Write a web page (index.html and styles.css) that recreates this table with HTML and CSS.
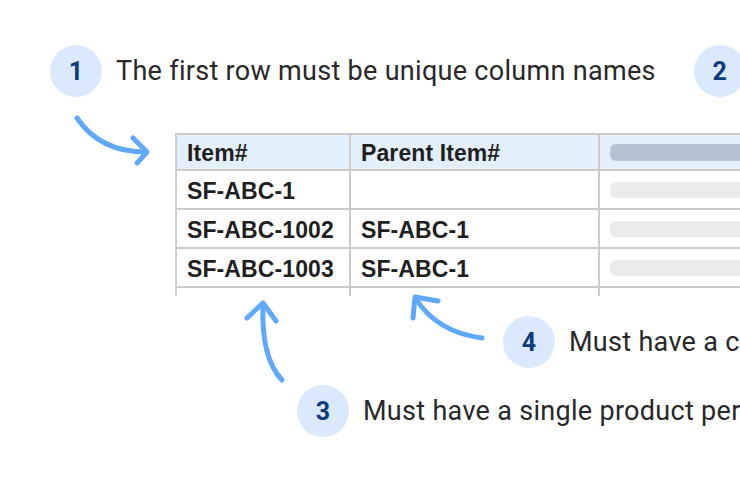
FILE: index.html
```html
<!DOCTYPE html>
<html>
<head>
<meta charset="utf-8">
<link rel="stylesheet" href="styles.css">
</head>
<body>
<div class="canvas">
  <div class="steps-top">
    <div class="step"><span class="num">1</span><span class="label">The first row must be unique column names</span></div>
    <div class="step"><span class="num">2</span><span class="label">Must have a parent column</span></div>
  </div>

  <table class="sheet">
    <tr class="head">
      <th class="c1">Item#</th>
      <th class="c2">Parent Item#</th>
      <th class="c3"><span class="bar bar-dark"></span></th>
    </tr>
    <tr class="row">
      <td class="c1">SF-ABC-1</td>
      <td class="c2"></td>
      <td class="c3"><span class="bar"></span></td>
    </tr>
    <tr class="row">
      <td class="c1">SF-ABC-1002</td>
      <td class="c2">SF-ABC-1</td>
      <td class="c3"><span class="bar"></span></td>
    </tr>
    <tr class="row">
      <td class="c1">SF-ABC-1003</td>
      <td class="c2">SF-ABC-1</td>
      <td class="c3"><span class="bar"></span></td>
    </tr>
    <tr class="tail">
      <td class="c1"></td>
      <td class="c2"></td>
      <td class="c3"></td>
    </tr>
  </table>

  <div class="step step-4"><span class="num">4</span><span class="label">Must have a child column</span></div>
  <div class="step step-3"><span class="num">3</span><span class="label">Must have a single product per row</span></div>

  <svg class="arrows" width="740" height="482" viewBox="0 0 740 482">
    <g fill="none" stroke="#5fa8fc" stroke-width="5" stroke-linecap="round" stroke-linejoin="round">
      <path d="M77 118 Q100 152 146 152"/>
      <path d="M133 138 L147 152 L137 163"/>
      <path d="M282 380 Q261 358 263 305"/>
      <path d="M247 318 L263 303 L276 321"/>
      <path d="M482 338 Q437 332 416 299"/>
      <path d="M413 318 L415 297 L438 301"/>
    </g>
  </svg>
</div>
</body>
</html>
```

FILE: styles.css
```css
html, body {
  margin: 0;
  padding: 0;
  background: #ffffff;
}

.canvas {
  position: relative;
  width: 740px;
  height: 482px;
  overflow: hidden;
  padding-top: 45px;
  box-sizing: border-box;
  font-family: Roboto, "Noto Sans", sans-serif;
  white-space: nowrap;
}

.steps-top {
  display: flex;
  gap: 38px;
  padding-left: 50px;
}

.step {
  display: flex;
  align-items: center;
  gap: 14px;
}

.num {
  flex: none;
  width: 52px;
  height: 52px;
  border-radius: 50%;
  background: #dbe9fd;
  color: #0c3b7a;
  font-family: Roboto, sans-serif;
  font-weight: 700;
  font-size: 25px;
  display: flex;
  align-items: center;
  justify-content: center;
}

.label {
  font-size: 27px;
  color: #282828;
  letter-spacing: 0.3px;
}

.sheet {
  margin-top: 36px;
  margin-left: 175px;
  border-collapse: collapse;
  font-family: "Liberation Sans", Arial, sans-serif;
  font-weight: 700;
  font-size: 23px;
  letter-spacing: 0.1px;
  color: #1f1f1f;
  table-layout: fixed;
  width: 700px;
}

.sheet th, .sheet td {
  border: 2px solid #cbcbcb;
  padding: 3px 0 0 10px;
  text-align: left;
  vertical-align: middle;
  box-sizing: border-box;
}

.sheet tr.head { height: 36px; }
.sheet tr.row { height: 39px; }

.sheet .head th {
  background: #e4effc;
}

.c1 { width: 174px; }
.c2 { width: 249px; }
.c3 { width: 277px; padding-left: 11px; }

.sheet .c3 { padding-top: 0; }

.sheet tr.tail { height: 9px; }
.sheet .tail td {
  padding: 0;
  border-bottom: none;
}

.bar {
  display: block;
  height: 16px;
  width: 200px;
  border-radius: 6px;
  background: #ebebeb;
}

.bar-dark {
  height: 17px;
  background: #b5c4d3;
}

.step-4 {
  margin-top: 20px;
  margin-left: 503px;
}

.step-3 {
  margin-top: 17px;
  margin-left: 297px;
}

.arrows {
  position: absolute;
  top: 0;
  left: 0;
  pointer-events: none;
}
```
